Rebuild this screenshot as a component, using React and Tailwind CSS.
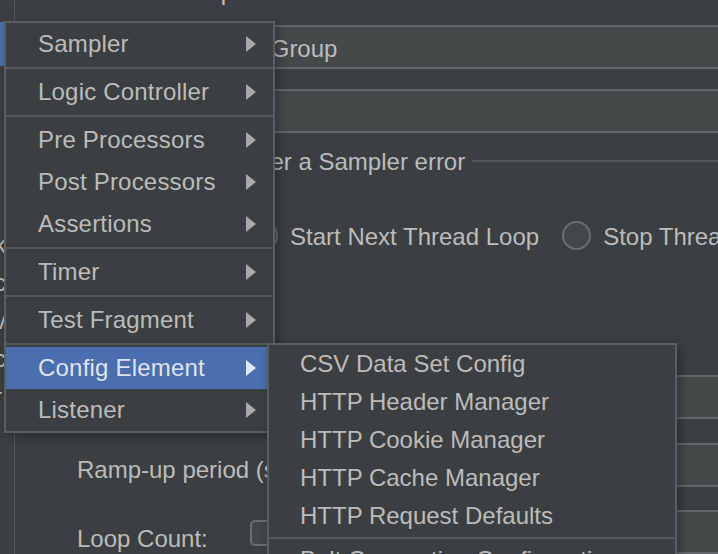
import React from "react";

const Arrow = ({ light }) => (
  <svg width="10" height="16" viewBox="0 0 10 16" className="shrink-0">
    <polygon points="0,0 10,8 0,16" fill={light ? "#e2e6ee" : "#a9a9a9"} />
  </svg>
);

const Sep = () => (
  <div className="h-[6px] flex items-center">
    <div className="h-[2px] w-full bg-[#55585a]" />
  </div>
);

const Item = ({ label, active }) => (
  <div
    className={
      active
        ? "flex items-center justify-between h-[42px] pl-[32px] pr-[17px] bg-[#4b6eaf] text-[#dfe3ea]"
        : "flex items-center justify-between h-[42px] pl-[32px] pr-[17px]"
    }
  >
    <span className="whitespace-nowrap tracking-[0.2px]">{label}</span>
    <Arrow light={active} />
  </div>
);

const SubItem = ({ label }) => (
  <div className="flex items-center h-[38px] pl-[31px] whitespace-nowrap">{label}</div>
);

const Field = ({ children, className = "" }) => (
  <div
    className={
      "flex-1 h-[44px] -mr-[6px] border-2 border-[#646769] bg-[#45494a] flex items-center pl-[8px] pt-[3px] whitespace-nowrap " +
      className
    }
  >
    {children}
  </div>
);

const Radio = () => (
  <div className="w-[29px] h-[29px] shrink-0 rounded-full border-2 border-[#6a6d6f] bg-[#41474a]" />
);

export default function App() {
  return (
    <div className="relative w-[718px] h-[554px] overflow-hidden bg-[#3c3f41] font-['Liberation_Sans',Arial,sans-serif] text-[24px] text-[#bbbbbb] leading-[28px]">
      <div className="flex h-full">
        {/* left tree panel */}
        <div className="w-[15px] shrink-0 flex flex-col border-r border-[#56595b] overflow-hidden">
          <div className="h-[22px]" />
          <div className="h-[44px] bg-[#4b6eaf]" />
          <div className="h-[160px]" />
          {["k", "c", "v", "c", "r"].map((c, i) => (
            <div key={i} className="h-[38px] flex items-center">
              <span className="-ml-[6px] text-[#bbbbbb]">{c}</span>
            </div>
          ))}
        </div>

        {/* main form */}
        <div className="flex-1 min-w-0 flex flex-col">
          <div className="h-[27px]">
            <div className="-mt-[22px] ml-[58px] text-[26px] leading-[26px] whitespace-nowrap">
              Thread Group
            </div>
          </div>

          <div className="flex items-center h-[44px] pl-[62px]">
            <span className="w-[101px] shrink-0">Name:</span>
            <Field>Thread Group</Field>
          </div>

          <div className="flex items-center h-[44px] mt-[20px] pl-[62px]">
            <span className="w-[101px] shrink-0">Comments:</span>
            <Field />
          </div>

          <div className="flex items-center h-[28px] mt-[14px] pl-[15px]">
            <div className="w-[10px] h-[2px] bg-[#535658] shrink-0" />
            <span className="ml-[5px] whitespace-nowrap pt-[2px]">Action to be taken after a Sampler error</span>
            <div className="flex-1 h-[2px] ml-[7px] bg-[#535658]" />
          </div>

          <div className="flex items-center h-[44px] mt-[39px] pl-[75px] whitespace-nowrap">
            <Radio />
            <span className="ml-[12px] pt-[3px]">Continue</span>
            <div className="ml-[22px]">
              <Radio />
            </div>
            <span className="ml-[12px] pt-[3px]">Start Next Thread Loop</span>
            <div className="ml-[23px]">
              <Radio />
            </div>
            <span className="ml-[12px] pt-[3px]">Stop Thread</span>
          </div>

          <div className="flex items-center h-[44px] mt-[119px] pl-[62px]">
            <span className="w-[303px] shrink-0 whitespace-nowrap pt-[8px]">Number of Threads (users):</span>
            <Field>1</Field>
          </div>

          <div className="flex items-center h-[44px] mt-[24px] pl-[62px]">
            <span className="w-[303px] shrink-0 whitespace-nowrap pt-[9px]">Ramp-up period (seconds):</span>
            <Field>1</Field>
          </div>

          <div className="flex items-center h-[44px] mt-[23px] pl-[62px]">
            <span className="w-[173px] shrink-0 whitespace-nowrap pt-[14px]">Loop Count:</span>
            <div className="w-[26px] h-[26px] mt-[2px] shrink-0 rounded-[5px] border-2 border-[#6a6d6f] bg-[#41474a]" />
            <span className="ml-[10px] w-[100px] shrink-0">Infinite</span>
            <Field>1</Field>
          </div>
        </div>
      </div>

      {/* main popup menu */}
      <div className="absolute left-[4px] top-[21px] w-[271px] border-2 border-[#5b5e60] bg-[#3c3f41] shadow-[3px_3px_10px_rgba(0,0,0,0.3)]">
        <Item label="Sampler" />
        <Sep />
        <Item label="Logic Controller" />
        <Sep />
        <Item label="Pre Processors" />
        <Item label="Post Processors" />
        <Item label="Assertions" />
        <Sep />
        <Item label="Timer" />
        <Sep />
        <Item label="Test Fragment" />
        <Sep />
        <Item label="Config Element" active />
        <Item label="Listener" />
      </div>

      {/* submenu */}
      <div className="absolute left-[267px] top-[343px] w-[410px] border-2 border-[#5b5e60] bg-[#3c3f41] shadow-[3px_3px_10px_rgba(0,0,0,0.3)]">
        <SubItem label="CSV Data Set Config" />
        <SubItem label="HTTP Header Manager" />
        <SubItem label="HTTP Cookie Manager" />
        <SubItem label="HTTP Cache Manager" />
        <SubItem label="HTTP Request Defaults" />
        <Sep />
        <SubItem label="Bolt Connection Configuration" />
        <SubItem label="Counter" />
      </div>
    </div>
  );
}
